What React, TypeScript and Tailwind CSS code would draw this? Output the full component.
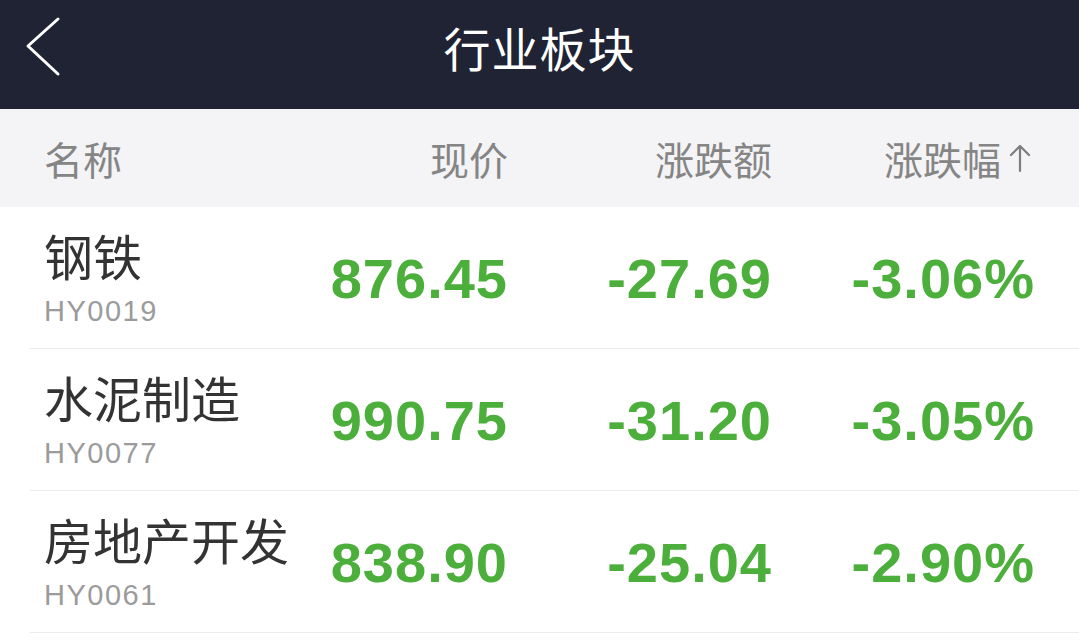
const rows = [
    { name: '钢铁', code: 'HY0019', price: '876.45', change: '-27.69', pct: '-3.06%' },
    { name: '水泥制造', code: 'HY0077', price: '990.75', change: '-31.20', pct: '-3.05%' },
    { name: '房地产开发', code: 'HY0061', price: '838.90', change: '-25.04', pct: '-2.90%' },
]

const cjk = "font-['Noto_Sans_CJK_SC',sans-serif]"
const num = "font-['Liberation_Sans','Noto_Sans_CJK_SC',sans-serif]"

const BackIcon = () => (
    <svg width="40" height="62" viewBox="0 0 40 62" fill="none">
        <path d="M34 3 L4 30 L34 58" stroke="#ffffff" strokeWidth="3" strokeLinecap="round" strokeLinejoin="round" />
    </svg>
)

const UpArrow = () => (
    <svg width="22" height="30" viewBox="0 0 22 30" fill="none">
        <path d="M11 28 V3 M2 12 L11 3 L20 12" stroke="#7d7d7d" strokeWidth="2.2" strokeLinecap="round" strokeLinejoin="round" />
    </svg>
)

export default function App() {
    return (
        <div className="w-[1079px] h-[640px] bg-white overflow-hidden">
            <div className="h-[109px] bg-[#1f2334] flex items-center relative">
                <div className="absolute left-[24px] top-[16px]">
                    <BackIcon />
                </div>
                <div className={`flex-1 text-center text-white text-[47px] tracking-[1px] pb-[14px] ${cjk}`}>
                    行业板块
                </div>
            </div>
            <div
                className={`h-[98px] bg-[#f4f3f6] grid grid-cols-[240px_224px_264px_263px] items-center px-[44px] text-[39px] text-[#858585] ${cjk}`}
            >
                <div>名称</div>
                <div className="text-right">现价</div>
                <div className="text-right">涨跌额</div>
                <div className="flex items-center justify-end gap-[8px] pr-[4px]">
                    <span>涨跌幅</span>
                    <UpArrow />
                </div>
            </div>
            {rows.map((r) => (
                <div key={r.code} className="ml-[30px] border-b border-[#ececec]">
                    <div className="h-[141px] grid grid-cols-[240px_224px_264px_263px] items-center pl-[14px]">
                        <div className="flex flex-col">
                            <div className={`text-[49px] leading-[56px] text-[#333333] whitespace-nowrap ${cjk}`}>
                                {r.name}
                            </div>
                            <div className={`mt-[10px] text-[29px] leading-[36px] tracking-[1.5px] text-[#9b9b9b] ${num}`}>
                                {r.code}
                            </div>
                        </div>
                        {[r.price, r.change, r.pct].map((v, i) => (
                            <div
                                key={i}
                                className={`text-right text-[56px] font-bold tracking-[1px] text-[#4caf3c] mt-[2px] ${num}`}
                            >
                                {v}
                            </div>
                        ))}
                    </div>
                </div>
            ))}
        </div>
    )
}
